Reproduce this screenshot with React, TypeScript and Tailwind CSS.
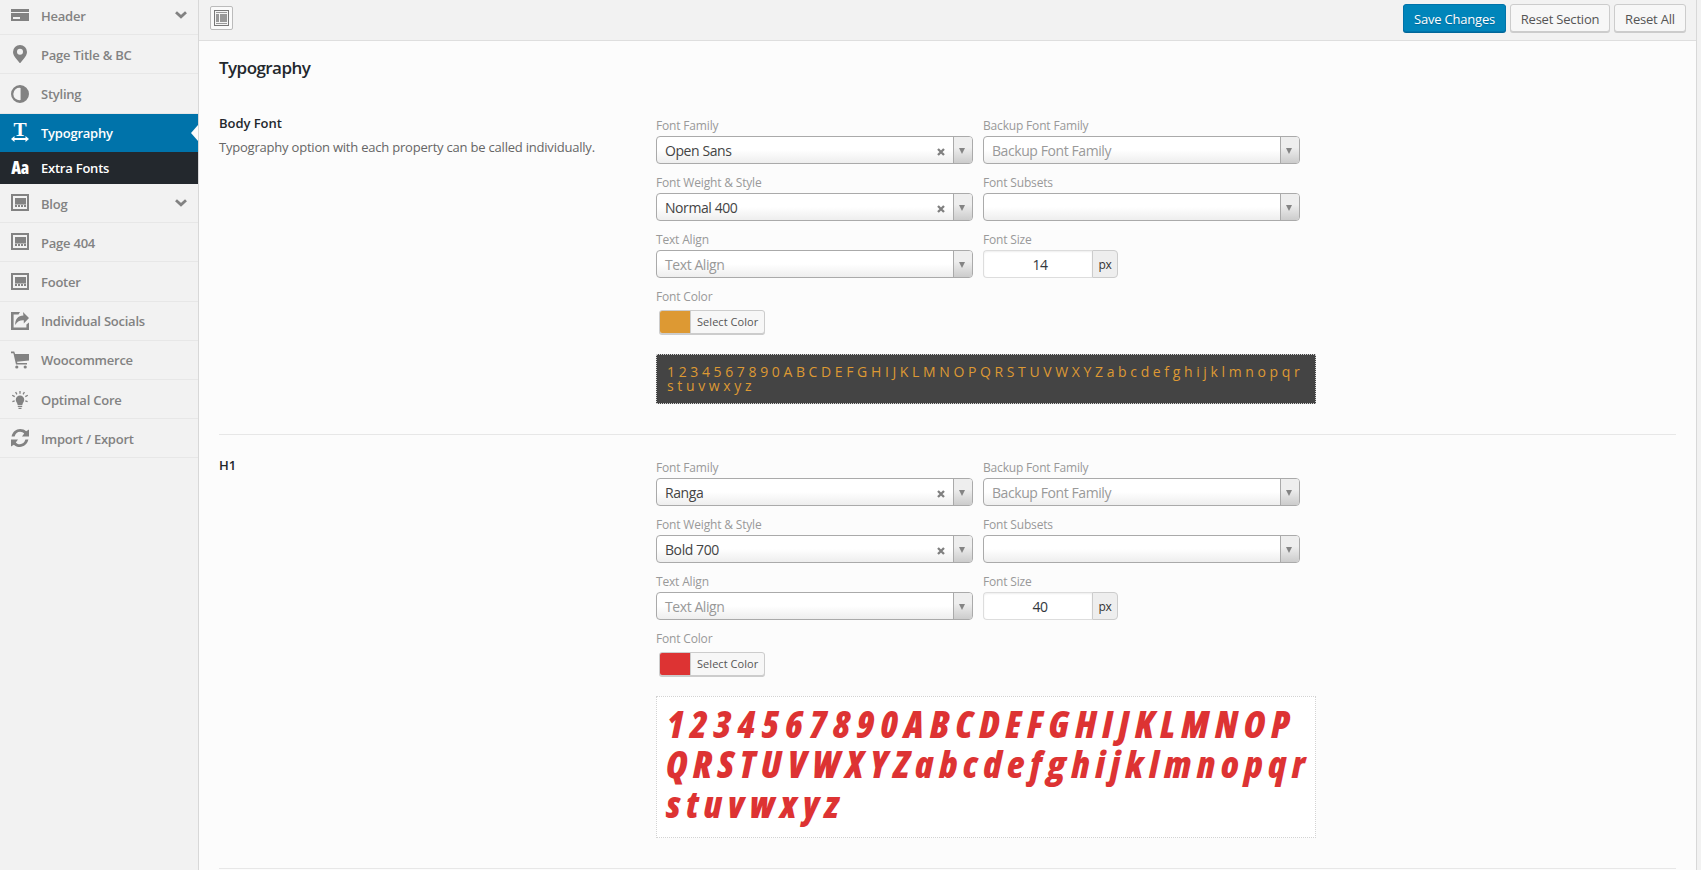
import React from 'react';
import type { ReactNode } from 'react';

const svg = 'block h-[18px] w-[18px] shrink-0 fill-current';

const HeaderIcon = () => (
  <svg viewBox="0 0 18 18" className={svg}>
    <path d="M0 3h18v3H0z" />
    <path fillRule="evenodd" d="M0 7h18v8H0zM2 11v2h7v-2z" />
  </svg>
);
const PinIcon = () => (
  <svg viewBox="0 0 18 18" className={svg}>
    <path fillRule="evenodd" d="M9 0a7 7 0 0 1 7 7c0 2.600-1.500 4.500-3 6.500L9.300 18h-.6L5 13.500C3.500 11.500 2 9.600 2 7a7 7 0 0 1 7-7zm0 3.800a3 3 0 1 0 0 6 3 3 0 0 0 0-6z" />
  </svg>
);
const AdjustIcon = () => (
  <svg viewBox="0 0 18 18" className={svg}>
    <path fillRule="evenodd" d="M9 0a9 9 0 1 1 0 18A9 9 0 0 1 9 0zm.6 2.900a6.200 6.200 0 1 0 0 12.200z" />
  </svg>
);
const TextWidthIcon = () => (
  <span className="flex h-[18px] w-[18px] shrink-0 flex-col items-center">
    <span className="h-[12px] scale-x-110 font-['Liberation_Serif',serif] text-[18px] leading-[13px] font-bold">T</span>
    <svg viewBox="0 0 18 6" className="block h-[6px] w-[18px] fill-current">
      <path d="M0 3l3.500-3v2h11V0L18 3l-3.500 3V4h-11v2z" />
    </svg>
  </span>
);
const FontIcon = () => (
  <span className="flex h-[18px] w-[18px] shrink-0 items-center justify-center font-['Open_Sans',sans-serif] text-[17px] leading-[18px] font-extrabold tracking-[-0.4px] [font-stretch:80%]">
    Aa
  </span>
);
const FooterIcon = () => (
  <svg viewBox="0 0 18 18" className={svg} shapeRendering="crispEdges">
    <path fillRule="evenodd" d="M0 0h18v17H0zM2 2v13h14V2z" />
    <path d="M4 4h11v6H4zM4 11h2v2H4zM7 11h2v2H7zM10 11h2v2h-2zM13 11h2v2h-2z" />
    <path opacity=".55" d="M4 10h11v1H4z" />
  </svg>
);
const ShareIcon = () => (
  <svg viewBox="0 0 18 18" className={svg}>
    <path d="M0 0h9L7.500 2.600H2.600v12.800h12.800v-2.900L18 10.500V18H0z" />
    <path d="M12 0l6 6-5.200 5.600V8.200C9 8 6.500 9.200 4.200 13 4 7.500 7 3.800 12.400 3.600z" />
  </svg>
);
const CartIcon = () => (
  <svg viewBox="0 0 18 18" className={svg}>
    <path d="M0 .5h3.200l.9 2.500H18v6.500l-12 1.200.4 1.300H16v1.500H5L2.400 2.300H0z" />
    <circle cx="5.800" cy="16" r="1.600" />
    <circle cx="14.200" cy="16" r="1.600" />
  </svg>
);
const BulbIcon = () => (
  <svg viewBox="0 0 18 18" className={svg}>
    <path d="M9 4.500a4.200 4.200 0 0 1 4.200 4.200c0 2.200-1.500 2.800-1.900 5.300H6.700c-.4-2.500-1.900-3.100-1.900-5.300A4.200 4.200 0 0 1 9 4.500zM6.800 14.700h4.400v1.300H6.800zM7.500 16.700h3V18h-3z" />
    <path fill="none" stroke="currentColor" strokeWidth="1.300" d="M9 0v2.800M4.600 1l1.300 2.400M13.400 1l-1.300 2.400M1.200 4.200l2.500 1.400M16.800 4.200l-2.500 1.400M1.400 10.600l2.300-.7M16.600 10.600l-2.300-.7" />
  </svg>
);
const RefreshIcon = () => (
  <svg viewBox="0 0 18 18" className={svg}>
    <path d="M.6 7.400C1.500 3 5 0 9.200 0c2.400 0 4.400.9 5.900 2.300L18 .6v6.800h-7l2.200-2.800C12 3.400 10.700 2.700 9.100 2.700c-2.700 0-4.700 1.800-5.500 4.700z" />
    <path d="M17.400 10.600C16.500 15 13 18 8.800 18c-2.400 0-4.400-.9-5.900-2.300L0 17.400v-6.800h7l-2.200 2.800c1.200 1.200 2.500 1.900 4.100 1.900 2.700 0 4.700-1.800 5.500-4.700z" />
  </svg>
);
const Chevron = () => (
  <svg viewBox="0 0 12 8" className="mr-[11px] ml-auto block h-[8px] w-[12px]">
    <path d="M1 1.200l5 4.600 5-4.600" fill="none" stroke="currentColor" strokeWidth="2.800" />
  </svg>
);

type Item = { label: string; icon: ReactNode; box: string; raised?: boolean; chevron?: boolean; notch?: boolean };

const idle = 'border-b border-[#e7e7e7] text-[#828282]';
const items: Item[] = [
  { label: 'Header', icon: <HeaderIcon />, box: `h-[35px] pb-[4px] ${idle}`, chevron: true },
  { label: 'Page Title & BC', icon: <PinIcon />, box: `h-[39px] ${idle}` },
  { label: 'Styling', icon: <AdjustIcon />, box: `h-[40px] ${idle}`, raised: true },
  { label: 'Typography', icon: <TextWidthIcon />, box: 'h-[38px] bg-[#0073aa] text-white', raised: true, notch: true },
  { label: 'Extra Fonts', icon: <FontIcon />, box: 'h-[32px] bg-[#23282d] text-white', raised: true },
  { label: 'Blog', icon: <FooterIcon />, box: `h-[39px] ${idle}`, chevron: true },
  { label: 'Page 404', icon: <FooterIcon />, box: `h-[39px] ${idle}` },
  { label: 'Footer', icon: <FooterIcon />, box: `h-[40px] ${idle}`, raised: true },
  { label: 'Individual Socials', icon: <ShareIcon />, box: `h-[39px] ${idle}`, raised: true },
  { label: 'Woocommerce', icon: <CartIcon />, box: `h-[39px] ${idle}`, raised: true },
  { label: 'Optimal Core', icon: <BulbIcon />, box: `h-[39px] pt-[2px] ${idle}`, raised: true },
  { label: 'Import / Export', icon: <RefreshIcon />, box: `h-[39px] ${idle}` },
];

function Sidebar() {
  return (
    <nav className="w-[198px] shrink-0">
      {items.map((item) => (
        <a key={item.label} className={`relative flex items-center pl-[11px] ${item.box}`}>
          {item.icon}
          <span className={`ml-[12px] text-[13px] leading-[18px] font-semibold tracking-[-0.23px] ${item.raised ? 'mt-0' : 'mt-[2px]'}`}>
            {item.label}
          </span>
          {item.chevron && <Chevron />}
          {item.notch && (
            <span className="absolute top-[11px] right-0 h-0 w-0 border-y-[8px] border-r-[7px] border-y-transparent border-r-[#fcfcfc]" />
          )}
        </a>
      ))}
    </nav>
  );
}

function Label({ children }: { children: ReactNode }) {
  return <div className="mb-[2px] h-[17px] text-[12px] leading-[18px] tracking-[-0.17px] text-[#999]">{children}</div>;
}

function Select({ label, value, placeholder }: { label: string; value?: string; placeholder?: string }) {
  return (
    <div className="h-[57px] w-[317px]">
      <Label>{label}</Label>
      <div className="flex h-[28px] overflow-hidden rounded-[4px] border border-[#aaa] bg-linear-to-t from-[#eee] to-white to-50%">
        <div className={`flex-1 pl-[8px] text-[14px] leading-[28px] tracking-[-0.42px] ${value ? 'text-[#444]' : 'text-[#999]'}`}>
          {value ?? placeholder}
        </div>
        {value && (
          <svg viewBox="0 0 8 8" className="mt-[11px] mr-[8px] h-[8px] w-[8px]">
            <path d="M1 1l6 6M7 1L1 7" stroke="#808080" strokeWidth="2.300" />
          </svg>
        )}
        <div className="w-[19px] border-l border-[#aaa] bg-linear-to-t from-[#ccc] to-[#eee] to-60%">
          <svg viewBox="0 0 6 5" className="mt-[11px] ml-[5px] h-[6px] w-[6px]" preserveAspectRatio="none">
            <path d="M0 0h6L3 5z" fill="#848484" />
          </svg>
        </div>
      </div>
    </div>
  );
}

function FontSize({ value }: { value: string }) {
  return (
    <div className="h-[57px] w-[317px]">
      <Label>Font Size</Label>
      <div className="flex h-[28px] w-[135px]">
        <div className="w-[109px] rounded-l-[4px] border border-r-0 border-[#ddd] bg-white pl-[4px] text-center text-[14px] leading-[28px] tracking-[-0.42px] text-[#32373c] shadow-[inset_0_1px_2px_rgba(0,0,0,0.07)]">
          {value}
        </div>
        <div className="w-[26px] rounded-r-[4px] border border-[#ccc] bg-[#eee] text-center text-[12px] leading-[27px] tracking-[-0.3px] text-[#333]">px</div>
      </div>
    </div>
  );
}

type FieldProps = {
  title: string;
  desc?: string;
  family: string;
  weight: string;
  size: string;
  swatch: string;
  box: string;
  children: ReactNode;
};

function TypographyField({ title, desc, family, weight, size, swatch, box, children }: FieldProps) {
  return (
    <section className={`flex border-b border-[#e7e7e7] ${box}`}>
      <div className="w-[437px] shrink-0">
        <h4 className="-mt-[3px] text-[13px] leading-[18px] font-semibold tracking-[-0.05px] text-[#23282d]">{title}</h4>
        {desc && <p className="mt-[6px] text-[13px] leading-[18px] tracking-[-0.21px] text-[#666]">{desc}</p>}
      </div>
      <div className="w-[660px]">
        <div className="grid grid-cols-[317px_317px] gap-x-[10px]">
          <Select label="Font Family" value={family} />
          <Select label="Backup Font Family" placeholder="Backup Font Family" />
          <Select label="Font Weight & Style" value={weight} />
          <Select label="Font Subsets" />
          <Select label="Text Align" placeholder="Text Align" />
          <FontSize value={size} />
        </div>
        <Label>Font Color</Label>
        <div className="mt-[5px] ml-[3px] flex h-[24px] w-[106px] overflow-hidden rounded-[3px] border border-[#ccc] bg-[#f7f7f7] shadow-[0_1px_0_#ccc]">
          <span className={`w-[30px] ${swatch}`} />
          <span className="flex-1 border-l border-[#ccc] pl-[6px] text-[11px] leading-[22px] font-medium tracking-[0.05px] text-[#555]">Select Color</span>
        </div>
        {children}
      </div>
    </section>
  );
}

function ToolButton({ children, box }: { children: ReactNode; box: string }) {
  return (
    <button className={`mt-[4px] h-[28px] rounded-[3px] border pt-px text-center text-[13px] leading-[27px] tracking-[-0.2px] ${box}`}>{children}</button>
  );
}

export default function App() {
  return (
    <div className="flex h-[870px] w-[1701px] overflow-hidden bg-[#f2f2f2] font-['Open_Sans',sans-serif]">
      <Sidebar />
      <main className="w-[1499px] shrink-0 border-x border-[#d8d8d8] bg-[#fcfcfc]">
        <div className="flex h-[41px] border-b border-[#dedede] bg-[#f2f2f2] pr-[10px] pl-[11px]">
          <span className="mt-[6px] flex h-[24px] w-[23px] items-center justify-center rounded-[2px] border border-[#bbb] bg-[#fafafa]">
            <svg viewBox="0 0 15 16" className="h-[16px] w-[15px]" shapeRendering="crispEdges">
              <path d="M.5.5h14v15H.5z" fill="#f5f5f5" stroke="#777" />
              <path d="M2 2h11v1H2zM2 4h3v8H2zM6 4h7v8H6zM2 13h11v1H2z" fill="#999" />
            </svg>
          </span>
          <div className="ml-auto flex gap-[4px]">
            <ToolButton box="w-[103px] border-[#0073aa] bg-[#0085ba] text-white shadow-[0_1px_0_#006799] [text-shadow:0_1px_1px_#006799]">Save Changes</ToolButton>
            <ToolButton box="w-[100px] border-[#ccc] bg-[#f7f7f7] text-[#555] shadow-[0_1px_0_#ccc]">Reset Section</ToolButton>
            <ToolButton box="w-[72px] border-[#ccc] bg-[#f7f7f7] text-[#555] shadow-[0_1px_0_#ccc]">Reset All</ToolButton>
          </div>
        </div>
        <div className="px-[20px]">
          <h3 className="pt-[15px] text-[17px] leading-[24px] font-semibold tracking-[-0.55px] text-[#23282d]">Typography</h3>
          <TypographyField
            title="Body Font"
            desc="Typography option with each property can be called individually."
            family="Open Sans"
            weight="Normal 400"
            size="14"
            swatch="bg-[#dd9933]"
            box="mt-[37px] h-[318px]"
          >
            <p className="mt-[20px] h-[50px] border border-dotted border-[#d3d3d3] bg-[#444] pt-[10px] pl-[10px] text-[14px] leading-[14px] tracking-[0px] text-[#dd9933]">
              1 2 3 4 5 6 7 8 9 0 A B C D E F G H I J K L M N O P Q R S T U V W X Y Z a b c d e f g h i j k l m n o p q r
              <br />s t u v w x y z
            </p>
          </TypographyField>
          <TypographyField title="H1" family="Ranga" weight="Bold 700" size="40" swatch="bg-[#dd3333]" box="mt-[24px] h-[410px]">
            <div className="mt-[20px] h-[142px] border border-dotted border-[#d3d3d3] bg-white pt-[7px] pl-[9px] text-[37px] leading-[40px] font-extrabold whitespace-nowrap text-[#dd3333] italic [font-stretch:75%] [text-align-last:justify] [word-spacing:-3px]">
              <p className="w-[623px]">1 2 3 4 5 6 7 8 9 0 A B C D E F G H I J K L M N O P</p>
              <p className="w-[639px]">Q R S T U V W X Y Z a b c d e f g h i j k l m n o p q r</p>
              <p className="w-[173px]">s t u v w x y z</p>
            </div>
          </TypographyField>
        </div>
      </main>
    </div>
  );
}
